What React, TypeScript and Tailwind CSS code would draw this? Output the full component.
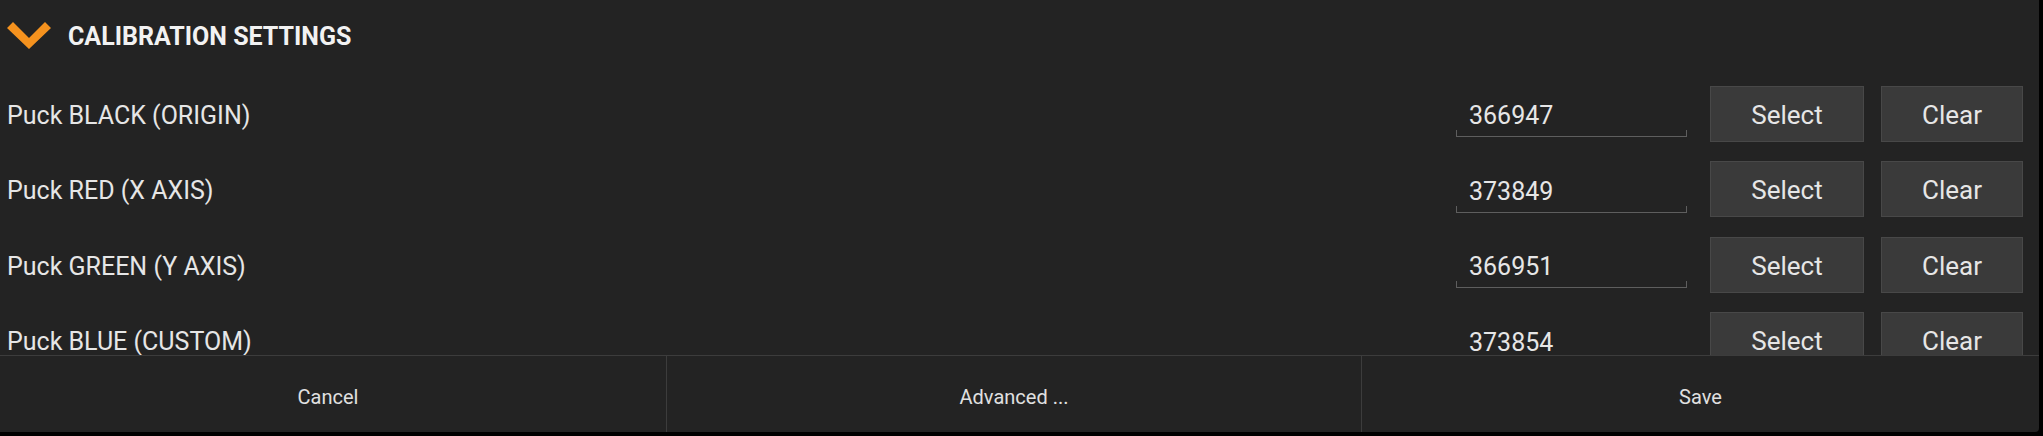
const pucks = [
  { label: "Puck BLACK (ORIGIN)", value: "366947" },
  { label: "Puck RED (X AXIS)", value: "373849" },
  { label: "Puck GREEN (Y AXIS)", value: "366951" },
  { label: "Puck BLUE (CUSTOM)", value: "373854" },
]

const Chevron = () => (
  <svg width="46" height="30" viewBox="0 0 46 30" className="shrink-0">
    <polygon points="0,6 6,0 22,16 38,0 44,6 22,27" fill="#f5921e" />
  </svg>
)

const PuckRow = ({ label, value }: { label: string; value: string }) => (
  <div className="flex h-[75.5px] shrink-0 items-center">
    <div className="flex-1 pl-[7px] pt-[4px] text-[25px] leading-[28px] text-[#e6e6e6]">
      {label}
    </div>
    <div className="flex w-[231px] flex-col pt-[12px]">
      <span className="pl-[13px] text-[25px] leading-[28px] text-[#e6e6e6]">
        {value}
      </span>
      <div className="h-[7px] border-x border-b border-[#5e5e5e]" />
    </div>
    <button className="ml-[23px] h-[56px] w-[154px] border border-[#484848] bg-[#3a3a3a] pt-[3px] text-[26px] text-[#e6e6e6]">
      Select
    </button>
    <button className="ml-[17px] mr-[16px] h-[56px] w-[142px] border border-[#484848] bg-[#3a3a3a] pt-[3px] text-[26px] text-[#e6e6e6]">
      Clear
    </button>
  </div>
)

const App = () => {
  return (
    <div className="h-[436px] w-full bg-black font-['Roboto',sans-serif]">
      <div className="flex h-[432px] w-[2039px] flex-col overflow-hidden rounded-br-[4px] bg-[#232323]">
        <div className="flex h-[76px] shrink-0 items-center pb-[3px] pl-[7px]">
          <Chevron />
          <h2 className="ml-[15px] text-[25px] font-bold text-[#f2f2f2]">
            CALIBRATION SETTINGS
          </h2>
        </div>

        <div className="flex min-h-0 flex-1 flex-col overflow-hidden">
          {pucks.map((p) => (
            <PuckRow key={p.label} label={p.label} value={p.value} />
          ))}
        </div>

        <div className="flex h-[77px] shrink-0 border-t border-[#3c3c3c] text-[20px] text-[#e0e0e0]">
          <button className="w-[667px] border-r border-[#3c3c3c] pr-[10px] pt-[6px]">Cancel</button>
          <button className="w-[695px] border-r border-[#3c3c3c] pt-[6px]">Advanced ...</button>
          <button className="flex-1 pt-[6px]">Save</button>
        </div>
      </div>
    </div>
  )
}

export default App
